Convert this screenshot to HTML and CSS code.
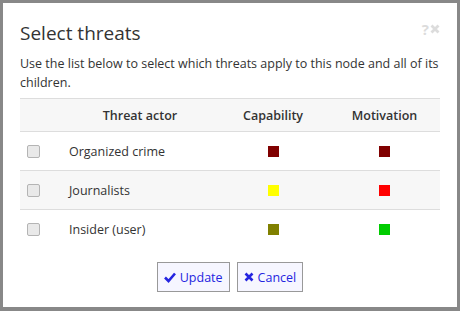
FILE: index.html
```html
<!DOCTYPE html>
<html lang="en">

<head>
    <meta charset="UTF-8">
    <meta name="viewport" content="width=device-width, initial-scale=1.0">
    <title>Select threats</title>
    <link rel="stylesheet" href="styles.css">
</head>

<body>
    <div class="dialog">
        <div class="dialog-head">
            <h1>Select threats</h1>
            <span class="dialog-tools">?<svg width="10" height="10" viewBox="0 0 10 10"><path d="M1.5 1.5 L8.5 8.5 M8.5 1.5 L1.5 8.5" fill="none" stroke="currentColor" stroke-width="2.8"/></svg></span>
        </div>
        <p class="intro">Use the list below to select which threats apply to this node and all of its children.</p>

        <!-- Threat list -->
        <table class="threats">
            <thead>
                <tr>
                    <th class="col-check"></th>
                    <th class="col-actor">Threat actor</th>
                    <th class="col-cap">Capability</th>
                    <th class="col-mot">Motivation</th>
                </tr>
            </thead>
            <tbody>
                <tr>
                    <td class="col-check"><input type="checkbox"></td>
                    <td class="col-actor">Organized crime</td>
                    <td class="col-cap"><span class="swatch" style="background-color: #800000;"></span></td>
                    <td class="col-mot"><span class="swatch" style="background-color: #800000;"></span></td>
                </tr>
                <tr>
                    <td class="col-check"><input type="checkbox"></td>
                    <td class="col-actor">Journalists</td>
                    <td class="col-cap"><span class="swatch" style="background-color: #ffff00;"></span></td>
                    <td class="col-mot"><span class="swatch" style="background-color: #ff0000;"></span></td>
                </tr>
                <tr>
                    <td class="col-check"><input type="checkbox"></td>
                    <td class="col-actor">Insider (user)</td>
                    <td class="col-cap"><span class="swatch" style="background-color: #808000;"></span></td>
                    <td class="col-mot"><span class="swatch" style="background-color: #00cc00;"></span></td>
                </tr>
            </tbody>
        </table>

        <div class="buttons">
            <button type="button">
                <svg class="btn-icon" width="12" height="12" viewBox="0 0 12 12"><path d="M1 6.5 L4.5 10 L11 2.5" fill="none" stroke="currentColor" stroke-width="2.6"/></svg>Update
            </button>
            <button type="button">
                <svg class="btn-icon" width="10" height="12" viewBox="0 0 10 12"><path d="M1.5 2.5 L8.5 9.5 M8.5 2.5 L1.5 9.5" fill="none" stroke="currentColor" stroke-width="2.6"/></svg>Cancel
            </button>
        </div>
    </div>
</body>

</html>
```

FILE: styles.css
```css
body {
    font-family: 'Open Sans', sans-serif;
    margin: 0;
    padding: 0;
    background-color: #fff;
    color: #333;
}

.dialog {
    width: 460px;
    height: 311px;
    box-sizing: border-box;
    border: 3px solid #888;
    border-bottom-width: 4px;
    padding: 17px 17px 0 17px;
    display: flex;
    flex-direction: column;
}

.dialog-head {
    display: flex;
    justify-content: space-between;
    align-items: flex-start;
}

h1 {
    margin: 0;
    font-size: 19px;
    font-weight: 400;
    line-height: 26px;
}

.dialog-tools {
    color: #dcdcdc;
    font-size: 15px;
    font-weight: 700;
    line-height: 14px;
    margin-top: 2px;
    display: flex;
    align-items: center;
    gap: 1px;
}

.intro {
    font-size: 12.5px;
    line-height: 19px;
    margin: 8px 0 6px 0;
}

.threats {
    width: 420px;
    border-collapse: collapse;
    table-layout: fixed;
    font-size: 12.5px;
}

.threats th {
    height: 32px;
    padding: 0;
    font-weight: 600;
    background-color: #f7f7f7;
    border-top: 1px solid #ddd;
    border-bottom: 1px solid #ddd;
}

.threats td {
    height: 38px;
    border-bottom: 1px solid #ddd;
    padding: 0;
}

.threats tbody tr:nth-child(even) td {
    background-color: #f7f7f7;
}

.threats tbody tr:last-child td {
    border-bottom: none;
}

.col-check {
    width: 43px;
}

.threats td.col-check {
    padding-left: 7px;
}

.col-actor {
    width: 154px;
}

.threats td.col-actor {
    padding-left: 6px;
}

.col-cap {
    width: 112px;
    text-align: center;
}

.col-mot {
    width: 111px;
    text-align: center;
}

input[type="checkbox"] {
    appearance: none;
    width: 13px;
    height: 13px;
    margin: 4px 0 0 0;
    border: 1px solid #b4b4b4;
    border-radius: 2px;
    background-color: #e9e9e9;
    box-sizing: border-box;
}

.swatch {
    display: inline-block;
    width: 11px;
    height: 11px;
    vertical-align: -1px;
}

.buttons {
    display: flex;
    justify-content: center;
    gap: 7px;
    margin-top: 14px;
}

button {
    font-family: 'Open Sans', sans-serif;
    font-size: 12.5px;
    color: #2424e0;
    background-color: #f6f6ff;
    border: 1px solid #999;
    border-radius: 0;
    padding: 0 6px;
    height: 30px;
    display: flex;
    align-items: center;
    cursor: pointer;
}

.btn-icon {
    margin-right: 4px;
}
```
